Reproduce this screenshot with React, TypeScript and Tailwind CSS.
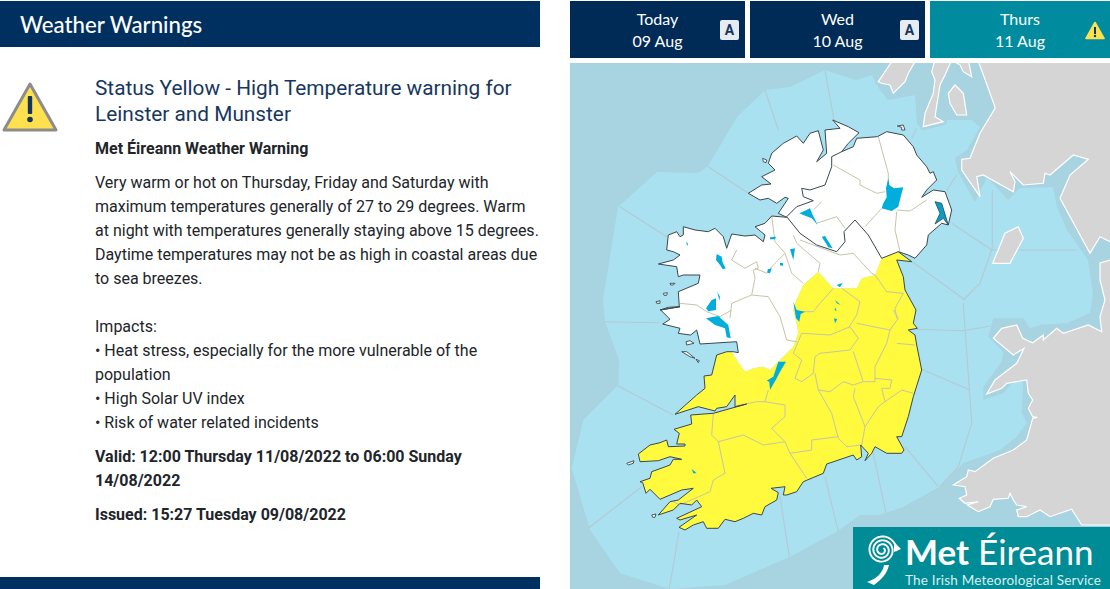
type P = number[];
const conv = (ox: number, oy: number, k = 3) => (pts: P[]) => pts.map(([x, y]) => [ox + x / k, oy + y / k]);
const z3 = conv(640, 110);
const z4 = conv(630, 310);
const z6 = conv(880, 60);
const z7 = conv(570, 60);
const z8 = conv(570, 300);
const z9 = conv(880, 290);
const d = (pts: P[], close = false) => "M" + pts.map((p) => p[0].toFixed(1) + "," + p[1].toFixed(1)).join("L") + (close ? "Z" : "");

const northCoast = [
  ...z8([[490,155],[505,158],[500,125],[390,132],[380,90],[362,105],[345,103],[325,100],[330,85],[278,72],[300,58],[272,30],[330,20]]),
  ...z3([[60,600],[85,592],[118,590],[115,545],[175,520],[180,495],[130,495],[115,500],[110,470],[55,462],[100,450],[120,435],[100,425],[80,420],[85,375],[110,365],[120,380],[130,375],[130,350],[165,360],[205,365],[225,355],[250,380],[260,415],[275,372],[315,378],[345,375],[370,395],[375,375],[345,350],[375,340],[395,318],[440,322],[415,310],[445,265],[435,262],[410,280],[385,265],[360,270],[325,250],[365,225],[393,222],[365,200],[405,180],[385,160],[395,130],[430,100],[470,78],[490,100],[510,70],[535,62],[550,120],[530,155],[560,130],[555,60],[600,55],[578,30],[625,50],[657,68],[625,100],[605,125],[640,110],[650,85],[712,80],[740,65],[790,75],[820,110],[830,135],[860,170],[870,190],[880,185],[890,210],[860,240],[845,262],[880,240],[915,245],[935,300],[925,345],[905,340],[865,375],[860,405],[825,445],[805,435],[775,425]]),
];
const yellowCoast = [
  ...z3([[775,425],[815,455],[770,450],[790,500],[795,540]]),
  ...z4([[858,0],[850,40],[862,55],[835,60],[855,75],[860,105],[875,180],[850,260],[835,320],[815,380],[800,380],[822,420],[815,430],[770,430],[735,410],[725,430],[705,452],[715,430],[692,405],[695,440],[680,450],[670,435],[590,462],[580,490],[520,515],[500,545],[470,555]]),
  ...z8([[640,585],[645,560],[603,565],[625,578],[620,600],[585,620],[575,645],[550,640],[520,655],[495,665],[465,658],[445,685],[410,685],[400,665],[370,675],[345,690],[327,682],[380,645],[330,660],[320,655],[395,620],[380,600],[365,615],[330,610],[310,630],[265,645],[300,605],[325,600],[370,565],[335,570],[270,598],[240,568],[228,580],[218,548],[210,545],[240,535],[245,515],[300,495],[310,478],[335,478],[300,470],[265,482],[210,485],[205,462],[240,435],[270,428],[290,420],[295,440],[345,438],[345,432],[320,432],[328,400],[312,388],[365,372],[362,345],[430,340],[530,312],[495,320],[495,285],[470,320],[440,325],[435,333],[385,320],[315,343],[380,285],[405,265],[402,228],[425,225],[440,165],[470,155],[490,155]]),
];
const boundary = [
  ...z4([[305,125],[320,150],[345,185],[370,175],[400,170],[420,180],[445,155],[490,110],[505,70],[500,40]]),
  ...z3([[460,600],[465,580],[490,525],[535,485],[580,535],[605,535],[650,535],[665,505],[705,495],[725,445],[775,425]]),
];
const niBorder = z3([[605,125],[575,140],[575,170],[555,225],[510,240],[485,235],[490,260],[520,272],[470,290],[440,320],[480,370],[530,405],[590,425],[615,395],[612,365],[645,330],[685,375],[725,445],[775,425]]);

const county: P[][] = [
  z3([[715,80],[745,190],[745,225]]),
  z3([[580,165],[660,210],[660,225],[710,250],[735,245]]),
  z3([[770,300],[810,303],[860,270]]),
  z3([[725,295],[675,350]]),
  z3([[770,305],[765,360],[780,425]]),
  z3([[545,275],[520,300]]),
  z3([[530,340],[590,320],[615,355]]),
  z3([[395,318],[405,395],[435,430],[455,490],[490,520]]),
  z3([[460,375],[470,400],[540,460],[535,485]]),
  z3([[480,390],[600,435],[640,430],[695,490],[705,495]]),
  z3([[290,420],[275,450],[315,475],[350,455],[355,475],[340,480],[345,505],[335,555],[275,580],[270,625]]),
  z3([[435,430],[400,465],[380,490],[345,475]]),
  z3([[335,555],[385,560],[420,620],[440,690],[470,695]]),
  z3([[120,580],[170,585],[200,605],[240,620],[275,600]]),
  z3([[605,535],[660,575],[650,615],[625,655]]),
  z3([[580,535],[540,580],[520,605],[490,605]]),
  z3([[740,545],[790,550],[765,595],[770,625]]),
  z3([[740,545],[705,495]]),
  z4([[515,70],[600,75],[660,50],[685,85],[660,120],[570,130],[555,140],[550,190],[515,215],[495,205],[515,150],[490,130],[515,70]]),
  z4([[680,40],[780,60],[770,100],[735,170],[735,215],[700,215],[670,125]]),
  z4([[800,100],[855,105]]),
  z4([[780,60],[805,25],[790,0]]),
  z4([[555,190],[565,240],[600,245],[640,215],[670,225],[700,215]]),
  z4([[565,240],[605,310],[625,385],[650,410],[695,405],[705,350],[670,260],[675,235]]),
  z4([[735,205],[785,210],[780,235],[755,235],[765,275],[745,290],[705,350]]),
  z4([[765,275],[815,240],[850,250]]),
  z4([[625,380],[545,390],[545,420],[480,430],[465,395],[425,355],[465,320],[465,285],[405,275],[380,275],[330,285],[250,310],[245,375],[265,395],[285,490],[250,510],[240,545],[150,585],[130,575]]),
  z4([[265,395],[340,375],[400,405],[465,395]]),
  z4([[480,430],[530,505]]),
  z4([[405,275],[415,240]]),
];

const lakes: P[][] = [
  z3([[745,205],[748,225],[762,235],[790,232],[782,260],[775,290],[755,303],[725,295],[730,280],[740,262],[738,235]]),
  z3([[478,310],[495,302],[510,295],[518,315],[533,345],[515,325],[490,315]]),
  z3([[545,380],[555,378],[578,415],[565,412]]),
  z3([[390,382],[408,380],[405,388],[390,388]]),
  z3([[450,418],[465,415],[460,450]]),
  z3([[420,458],[430,460],[428,468],[420,466]]),
  z3([[383,478],[395,475],[390,490],[382,488]]),
  z3([[230,432],[245,440],[248,458],[257,475],[248,478],[240,465],[228,450]]),
  z3([[138,397],[144,400],[142,408]]),
  z3([[232,545],[240,560],[238,572]]),
  z3([[198,595],[215,570],[228,565],[228,600],[205,604]]),
  z4([[228,25],[265,18],[295,45],[302,85],[290,82],[285,55],[255,45]]),
  z3([[460,575],[470,600],[495,605],[482,612],[478,635],[468,625]]),
  z3([[590,525],[608,518],[600,532]]),
  z3([[585,570],[602,585],[590,580]]),
  z3([[585,592],[590,603],[584,600]]),
  z3([[582,625],[592,628],[585,640]]),
  z4([[445,155],[468,155],[450,185],[440,205],[420,240],[418,215],[410,212],[430,200]]),
  z8([[365,507],[380,520],[370,520]]),
];
const strangford = z3([[885,275],[905,280],[925,345],[910,325],[885,342],[900,310]]);

const islands: P[][] = [
  z3([[368,145],[380,150],[378,158],[370,155]]),
  z3([[772,48],[790,45],[795,60],[785,60],[785,52]]),
  z3([[90,520],[105,520],[100,525],[92,525]]),
  z3([[70,550],[82,548],[80,556],[72,556]]),
  z3([[48,575],[60,572],[60,580],[50,580]]),
  z8([[170,490],[192,482],[190,490],[175,495]]),
  z8([[335,155],[350,155],[375,175],[360,170]]),
  z8([[378,178],[388,182],[385,188]]),
  z8([[245,645],[258,642],[255,652],[248,652]]),
  z8([[348,125],[360,122],[372,130],[350,135]]),
];

const seaLight = [
  [603,300],[618,207],[657,172],[698,173],[708,166],[737,117],[765,90],[790,87],[825,70],[856,80],[872,75],[880,90],[888,100],[915,95],[917,125],[923,128],[947,120],[972,120],[980,127],[967,150],[955,158],[958,172],[975,202],[987,177],[1008,200],[1020,188],[1053,187],[1057,207],[1067,230],[1088,260],[1093,293],[1090,313],
  ...z9([[560,100],[480,105],[450,115],[430,85],[340,85],[325,140],[370,185],[365,215],[310,290],[310,330],[370,310],[400,275],[430,275],[425,370],[440,400],[410,440],[360,480],[250,520],[180,590],[70,650],[0,675]]),
  ...z8([[870,645],[800,695],[660,770],[465,855],[300,867],[150,820],[60,690],[5,505],[40,360],[145,255],[147,180],[105,65]]),
];

const seaLines: P[][] = [
  z3([[205,170],[325,250]]),
  z8([[105,65],[270,68]]),
  z8([[145,258],[310,345]]),
  z8([[55,685],[215,560]]),
  z8([[327,695],[298,867]]),
  z8([[630,590],[658,770]]),
  z8([[765,530],[805,695]]),
  z4([[825,410],[925,530]]),
  z4([[730,430],[768,610]]),
  z9([[110,118],[250,122],[330,108]]),
  z9([[250,40],[275,400],[235,530],[180,590]]),
  z9([[125,238],[270,300]]),
  z6([[215,490],[335,570],[300,670],[250,720]]),
  z6([[90,600],[255,720]]),
  z6([[337,390],[337,570],[590,570]]),
  z6([[230,345],[200,390]]),
  z6([[110,205],[95,235]]),
  z7([[150,440],[290,530]]),
  z7([[585,90],[625,210]]),
  [[825,70],[834,120]],
];

const gb = [
  [979,63],[995,107],
  ...z6([[345,145],[300,220],[270,295],[245,298],[245,330],[300,410],[290,350],[310,345],[400,395],[405,365],[390,335],[430,375],[490,370],[495,340],[510,345],[580,285],[625,298],[570,345],[540,415],[630,580],[660,530],[690,545]]),
  [1150,242],[1150,260],[1110,260],[1100,263],[1100,280],[1105,300],
  ...z9([[660,80],[665,125],[625,105],[550,130],[530,115],[490,150],[490,135],[458,158],[428,145],[410,105],[365,115],[340,145],[400,195],[432,175],[410,220],[345,270],[320,312],[365,295],[380,280],[440,270],[445,310],[458,330],[445,355],[458,380],[472,382],[458,385],[440,450],[400,480],[340,505],[285,545],[265,540],[260,560],[220,585],[255,590],[260,615],[238,625],[255,640],[295,635],[262,645],[295,665],[330,650],[340,628],[385,625],[390,610],[400,630],[410,645],[440,650],[410,660],[415,680],[440,680],[480,660],[510,680],[575,658],[605,705],[690,705]]),
  [1150,540],[1150,50],[979,50],
];
const scot: P[][] = [
  z6([[-5,65],[35,5],[105,5],[85,40],[75,65],[40,100],[30,75],[5,70]]),
  z6([[165,0],[215,0],[195,45],[180,75],[165,170],[190,185],[130,200],[135,160],[160,100],[165,60],[155,35]]),
  z6([[205,100],[225,75],[250,100],[260,165],[230,165],[210,130]]),
  z6([[215,0],[265,0],[275,50],[250,35],[240,15]]),
  z6([[338,610],[375,520],[415,500],[430,535],[390,610]]),
];

function IrelandMap() {
  return (
    <svg viewBox="570 63 540 526" className="block w-full h-full">
      <rect x="570" y="63" width="540" height="526" fill="#a8d3e0" />
      <path d={d(seaLight as P[], true)} fill="#a9e1f0" />
      <g fill="none" stroke="#b5c9d2" strokeWidth="1.1">
        {seaLines.map((l, i) => <path key={i} d={d(l)} />)}
      </g>
      <g stroke="#a8d3e0" strokeWidth="7" strokeLinejoin="round" fill="#a8d3e0">
        {scot.map((s, i) => i < 4 && <path key={i} d={d(s, true)} />)}
      </g>
      <path d={d(gb as P[], true)} fill="#d5d5d5" stroke="#fff" strokeWidth="1.2" />
      <g fill="#d5d5d5" stroke="#fff" strokeWidth="1.2">
        {scot.map((s, i) => <path key={i} d={d(s, true)} />)}
      </g>
      <path d={d([...northCoast, ...[...boundary].reverse()], true)} fill="#fff" />
      <path d={d([...yellowCoast, ...boundary], true)} fill="#fffa3d" />
      <g fill="none" stroke="#c6c5a8" strokeWidth="1" strokeLinejoin="round">
        {county.map((l, i) => <path key={i} d={d(l)} />)}
      </g>
      <g fill="#00aedb">
        {lakes.map((l, i) => <path key={i} d={d(l, true)} />)}
      </g>
      <path d={d(strangford, true)} fill="#0d9cc4" stroke="#234a5c" strokeWidth="0.8" />
      <g fill="none" stroke="#3a4850" strokeWidth="1" strokeLinejoin="round">
        <path d={d(northCoast)} />
        <path d={d(yellowCoast)} />
        <path d={d(niBorder)} />
      </g>
      <g fill="#fff" stroke="#3a4850" strokeWidth="0.9">
        {islands.map((l, i) => <path key={i} d={d(l, true)} />)}
      </g>
    </svg>
  );
}

const spiral = (() => {
  const pts: string[] = [];
  for (let i = 0; i <= 120; i++) {
    const t = i / 120;
    const a = -0.6 + t * Math.PI * 2 * 3.1;
    const r = 2.5 + t * 12;
    pts.push((16 + r * Math.cos(a)).toFixed(2) + "," + (17 + r * Math.sin(a)).toFixed(2));
  }
  return "M" + pts.join("L");
})();

function Swirl() {
  return (
    <svg viewBox="0 0 36 54" className="w-[36px] h-[54px] shrink-0" fill="none" stroke="#fff" strokeLinecap="round">
      <path d={spiral} strokeWidth="1.9" />
      <path d="M28 9 L35 16 L28 19 Z" fill="#fff" stroke="none" />
      <path d="M18 32 C17 40 10 46 1 49 L8 52 C15 47 21 41 23 32 Z" fill="#fff" stroke="none" />
    </svg>
  );
}

function BadgeA() {
  return (
    <div className="absolute left-[150px] top-[19px] flex items-center justify-center w-[19px] h-[20px] rounded-[2px] bg-[#e7ebf2] text-[#17365f] text-[14px] font-bold font-['Roboto',sans-serif] leading-none">
      A
    </div>
  );
}

function Tab({ day, date, active, width }: { day: string; date: string; active?: boolean; width: string }) {
  return (
    <div className={`relative flex flex-col items-center justify-center h-[57px] text-[#fff] text-[16px] leading-[22px] font-['Lato',sans-serif] ${width} ${active ? "bg-[#008c9e]" : "bg-[#002b57]"}`}>
      <span>{day}</span>
      <span>{date}</span>
      {active ? (
        <svg viewBox="0 0 20 19" className="absolute right-[5px] top-[20px] w-[20px] h-[19px]">
          <path d="M10 1.5 L19 17.5 H1 Z" fill="#ffe14f" stroke="#ffe14f" strokeWidth="1.6" strokeLinejoin="round" />
          <rect x="9" y="6" width="2" height="7" fill="#0f3a5c" />
          <circle cx="10" cy="15" r="1.2" fill="#0f3a5c" />
        </svg>
      ) : (
        <BadgeA />
      )}
    </div>
  );
}

export default function App() {
  return (
    <div className="flex gap-[30px] w-[1110px] h-[589px] overflow-hidden bg-white font-['Roboto',sans-serif] text-[#212529]">
      <div className="flex flex-col w-[540px] shrink-0">
        <div className="mt-px h-[46px] shrink-0 flex items-center pl-[20px] pt-[2px] bg-[#003060] text-white text-[22.2px] font-medium font-['Lato',sans-serif]">
          Weather Warnings
        </div>
        <div className="flex flex-1 pt-[28px]">
          <div className="w-[95px] shrink-0 pt-[5px]">
            <svg viewBox="0 0 60 54" className="w-[60px] h-[54px] overflow-visible">
              <path d="M30 4 L56 50 H4 Z" fill="#ffe14f" stroke="#8c8c8c" strokeWidth="3" strokeLinejoin="round" />
              <rect x="27.8" y="16" width="4.4" height="18" rx="1" fill="#12365e" />
              <circle cx="30" cy="39.5" r="2.8" fill="#12365e" />
            </svg>
          </div>
          <div className="flex-1 text-[16px] leading-[24px]">
            <h2 className="text-[20.8px] leading-[26px] text-[#17375e]">
              Status Yellow - High Temperature warning for<br />Leinster and Munster
            </h2>
            <p className="mt-[10px] font-bold">Met Éireann Weather Warning</p>
            <p className="mt-[10px]">
              Very warm or hot on Thursday, Friday and Saturday with<br />
              maximum temperatures generally of 27 to 29 degrees. Warm<br />
              at night with temperatures generally staying above 15 degrees.<br />
              Daytime temperatures may not be as high in coastal areas due<br />
              to sea breezes.<br />
              <br />
              Impacts:<br />
              • Heat stress, especially for the more vulnerable of the<br />
              population<br />
              • High Solar UV index<br />
              • Risk of water related incidents
            </p>
            <p className="mt-[10px] font-bold">Valid: 12:00 Thursday 11/08/2022 to 06:00 Sunday<br />14/08/2022</p>
            <p className="mt-[10px] font-bold">Issued: 15:27 Tuesday 09/08/2022</p>
          </div>
        </div>
        <div className="h-[12px] shrink-0 bg-[#003060]" />
      </div>
      <div className="flex flex-col w-[540px] shrink-0">
        <div className="flex gap-[5px] mt-px h-[57px] shrink-0">
          <Tab day="Today" date="09 Aug" width="w-[175px]" />
          <Tab day="Wed" date="10 Aug" width="w-[175px]" />
          <Tab day="Thurs" date="11 Aug" active width="w-[180px]" />
        </div>
        <div className="relative mt-[5px] flex-1 min-h-0">
          <IrelandMap />
          <div className="absolute right-0 bottom-0 w-[257px] h-[62px] flex items-start pl-[13px] pt-[6px] gap-[3px] bg-[#008c96] text-white font-['Lato',sans-serif]">
            <Swirl />
            <div className="flex flex-col whitespace-nowrap">
              <div className="text-[35px] leading-[36px]">
                <span className="font-bold">Met</span> Éireann
              </div>
              <div className="text-[13.5px] leading-[16px] tracking-[0.2px] mt-[3px] text-[#d8f0f2]">The Irish Meteorological Service</div>
            </div>
          </div>
        </div>
      </div>
    </div>
  );
}
